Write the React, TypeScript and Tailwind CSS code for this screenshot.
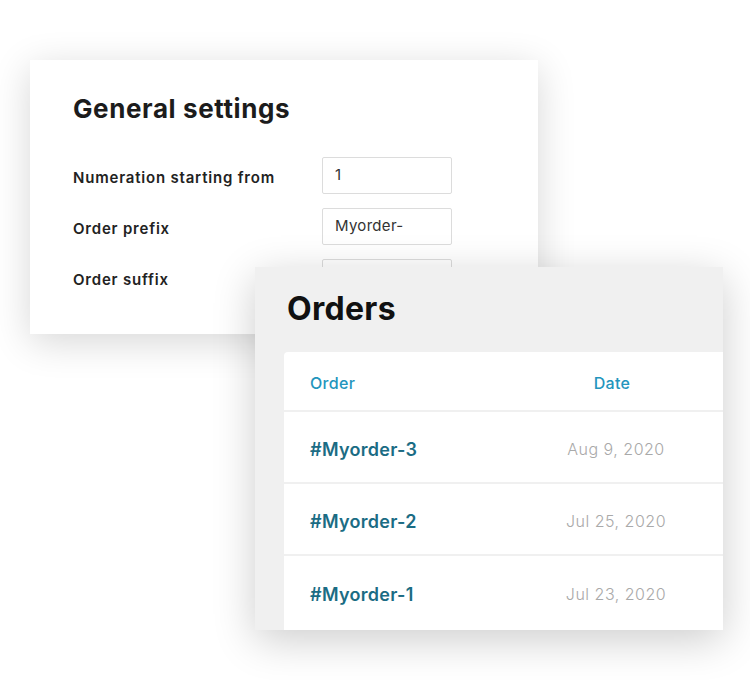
const font = { fontFamily: "Inter, 'Open Sans', sans-serif" };

const settings = [
  { label: "Numeration starting from", value: "1" },
  { label: "Order prefix", value: "Myorder-" },
  { label: "Order suffix", value: "" },
];

const orders = [
  { id: "#Myorder-3", date: "Aug 9, 2020" },
  { id: "#Myorder-2", date: "Jul 25, 2020" },
  { id: "#Myorder-1", date: "Jul 23, 2020" },
];

function GeneralSettings() {
  return (
    <div className="absolute left-[30px] top-[60px] w-[508px] h-[274px] bg-white shadow-[0_8px_36px_rgba(0,0,0,0.16)] pl-[43px] pt-[33px]">
      <h2 className="text-[26px] leading-[32px] font-bold text-[#1c1c1c] tracking-[0.6px]">
        General settings
      </h2>
      <div className="mt-[32px] flex flex-col gap-[14px]">
        {settings.map((s) => (
          <div key={s.label} className="flex items-center">
            <span className="w-[249px] mt-[6px] text-[15px] font-semibold text-[#222] tracking-[0.8px]">
              {s.label}
            </span>
            <div className="w-[130px] h-[37px] border border-[#dcdcdc] rounded-[2px] flex items-center px-[12px] text-[15px] text-[#333] tracking-[0.3px]">
              {s.value}
            </div>
          </div>
        ))}
      </div>
    </div>
  );
}

function Orders() {
  return (
    <div className="absolute left-[255px] top-[267px] w-[468px] h-[363px] bg-[#f0f0f0] shadow-[0_10px_40px_rgba(0,0,0,0.2)] flex flex-col overflow-hidden">
      <h2 className="pl-[32px] pt-[22px] text-[32px] leading-[40px] font-bold text-[#111] tracking-[0.3px]">
        Orders
      </h2>
      <div className="ml-[29px] mt-[23px] flex-1 bg-white rounded-tl-[4px] flex flex-col">
        <div className="flex items-center h-[60px] pt-[3px] border-b-2 border-[#f0f0f0] text-[16px] font-medium text-[#2395bd] tracking-[0.3px]">
          <span className="w-[256px] pl-[26px]">Order</span>
          <span className="w-[144px] text-center">Date</span>
        </div>
        {orders.map((o) => (
          <div
            key={o.id}
            className="flex items-center h-[72px] pt-[4px] border-b-2 border-[#f0f0f0] last:border-b-0"
          >
            <span className="w-[256px] pl-[26px] text-[18px] font-semibold text-[#1b6c84] tracking-[0.3px]">
              {o.id}
            </span>
            <span className="w-[152px] text-center text-[16px] font-light text-[#a9a9a9] tracking-[0.5px]">
              {o.date}
            </span>
          </div>
        ))}
      </div>
    </div>
  );
}

export default function App() {
  return (
    <div className="relative w-[750px] h-[680px] bg-white overflow-hidden" style={font}>
      <GeneralSettings />
      <Orders />
    </div>
  );
}
